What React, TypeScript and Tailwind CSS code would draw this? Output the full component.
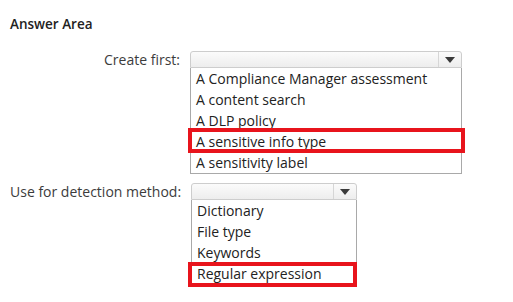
import React from "react";

type DropProps = {
  width: string;
  items: string[];
  selected: number;
  box: string;
};

function Dropdown({ width, items, selected, box }: DropProps) {
  return (
    <div className={`${width} flex flex-col`}>
      <div className="h-[17px] flex border border-[#cdcdcd] rounded-t-[3px] bg-gradient-to-b from-[#fbfbfb] to-[#ededed]">
        <div className="flex-1" />
        <div className="w-[23px] border-l border-[#d6d6d6] flex items-center justify-center">
          <svg width="10" height="6" viewBox="0 0 10 6">
            <path d="M0 0 L10 0 L5 6 Z" fill="#3a3a3a" />
          </svg>
        </div>
      </div>
      <div className="border border-t-0 border-[#a9a9a9] bg-white">
        {items.map((item, i) => (
          <div key={item} className="relative h-[21px] pl-[5px] flex items-center text-[14px] text-[#222] whitespace-nowrap">
            {item}
            {i === selected && (
              <div className={`absolute ${box} border-[4px] border-[#e8141c]`} />
            )}
          </div>
        ))}
      </div>
    </div>
  );
}

export default function App() {
  return (
    <div className="w-[513px] h-[302px] bg-white overflow-hidden font-['Open_Sans',sans-serif]">
      <div className="pl-[10px] pt-[14px] text-[13.5px] font-semibold text-[#222] leading-[20px]">Answer Area</div>

      <div className="flex mt-[17px]">
        <div className="w-[180px] pl-[10px] text-right text-[14px] text-[#3c3c3c] leading-[17px] whitespace-nowrap">Create first:</div>
        <div className="ml-[10px]">
          <Dropdown
            width="w-[272px]"
            selected={3}
            box="-top-[3px] -bottom-[1px] -left-[3px] -right-[4px]"
            items={[
              "A Compliance Manager assessment",
              "A content search",
              "A DLP policy",
              "A sensitive info type",
              "A sensitivity label",
            ]}
          />
        </div>
      </div>

      <div className="flex mt-[9px]">
        <div className="w-[180px] pl-[10px] text-right text-[14px] text-[#3c3c3c] leading-[17px] whitespace-nowrap">Use for detection method:</div>
        <div className="ml-[11px]">
          <Dropdown
            width="w-[166px]"
            selected={3}
            box="-top-[1px] -bottom-[3px] -left-[4px] -right-[1px]"
            items={["Dictionary", "File type", "Keywords", "Regular expression"]}
          />
        </div>
      </div>
    </div>
  );
}
